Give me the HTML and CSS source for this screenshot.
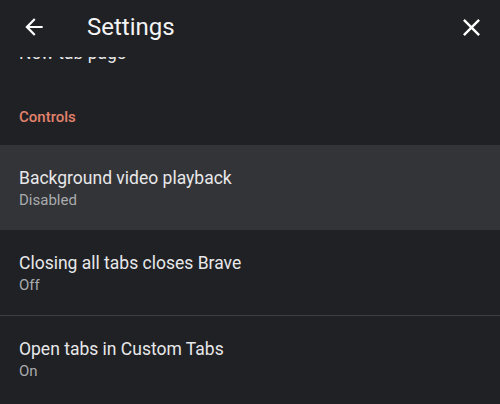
FILE: index.html
```html
<!DOCTYPE html>
<html lang="en">
<head>
<meta charset="utf-8">
<title>Settings</title>
<link rel="stylesheet" href="styles.css">
</head>
<body>
<div class="screen">
  <header class="toolbar">
    <span class="icon back">
      <svg viewBox="0 0 24 24" width="26" height="26"><path fill="currentColor" d="M20 11H7.83l5.59-5.59L12 4l-8 8 8 8 1.41-1.41L7.83 13H20v-2z"/></svg>
    </span>
    <h1 class="title">Settings</h1>
    <span class="icon close">
      <svg viewBox="0 0 24 24" width="29" height="29"><path fill="currentColor" d="M19 6.41L17.59 5 12 10.59 6.41 5 5 6.41 10.59 12 5 17.59 6.41 19 12 13.41 17.59 19 19 17.59 13.41 12z"/></svg>
    </span>
  </header>
  <main class="list">
    <div class="pref scrolled">
      <div class="pref-title">New tab page</div>
    </div>
    <div class="category">Controls</div>
    <div class="pref active">
      <div class="pref-title">Background video playback</div>
      <div class="pref-summary">Disabled</div>
    </div>
    <div class="pref">
      <div class="pref-title">Closing all tabs closes Brave</div>
      <div class="pref-summary">Off</div>
    </div>
    <div class="pref divided">
      <div class="pref-title">Open tabs in Custom Tabs</div>
      <div class="pref-summary">On</div>
    </div>
  </main>
</div>
</body>
</html>
```

FILE: styles.css
```css
html, body {
  margin: 0;
  padding: 0;
  background: #202124;
}

body {
  font-family: Roboto, "Noto Sans", sans-serif;
  color: #e8eaed;
}

.screen {
  width: 500px;
  height: 404px;
  display: flex;
  flex-direction: column;
  overflow: hidden;
  background: #202124;
}

.toolbar {
  flex: 0 0 auto;
  height: 50px;
  padding: 2px 0 5px;
  display: flex;
  align-items: center;
  background: #202124;
}

.icon {
  display: flex;
  color: #ffffff;
}

.back {
  margin-left: 21px;
}

.close {
  margin-left: auto;
  margin-right: 14px;
}

.title {
  margin: 0 0 0 40px;
  font-size: 24px;
  font-weight: 400;
  line-height: 30px;
  color: #f4f4f4;
}

.list {
  flex: 1 1 auto;
  display: flex;
  flex-direction: column;
  overflow: hidden;
}

.pref {
  padding: 21px 19px 20px;
}

.pref.scrolled {
  margin-top: -16px;
  padding: 0 19px;
}

.pref.active {
  background: #333437;
}

.pref.divided {
  border-top: 1px solid #3e3f42;
}

.pref-title {
  font-size: 17.5px;
  line-height: 24px;
  color: #e8e8ea;
}

.pref-summary {
  font-size: 15px;
  line-height: 20px;
  color: #a9abae;
}

.category {
  padding: 42px 19px 18px;
  font-size: 15px;
  line-height: 20px;
  font-weight: 500;
  color: #e2826c;
}
```
